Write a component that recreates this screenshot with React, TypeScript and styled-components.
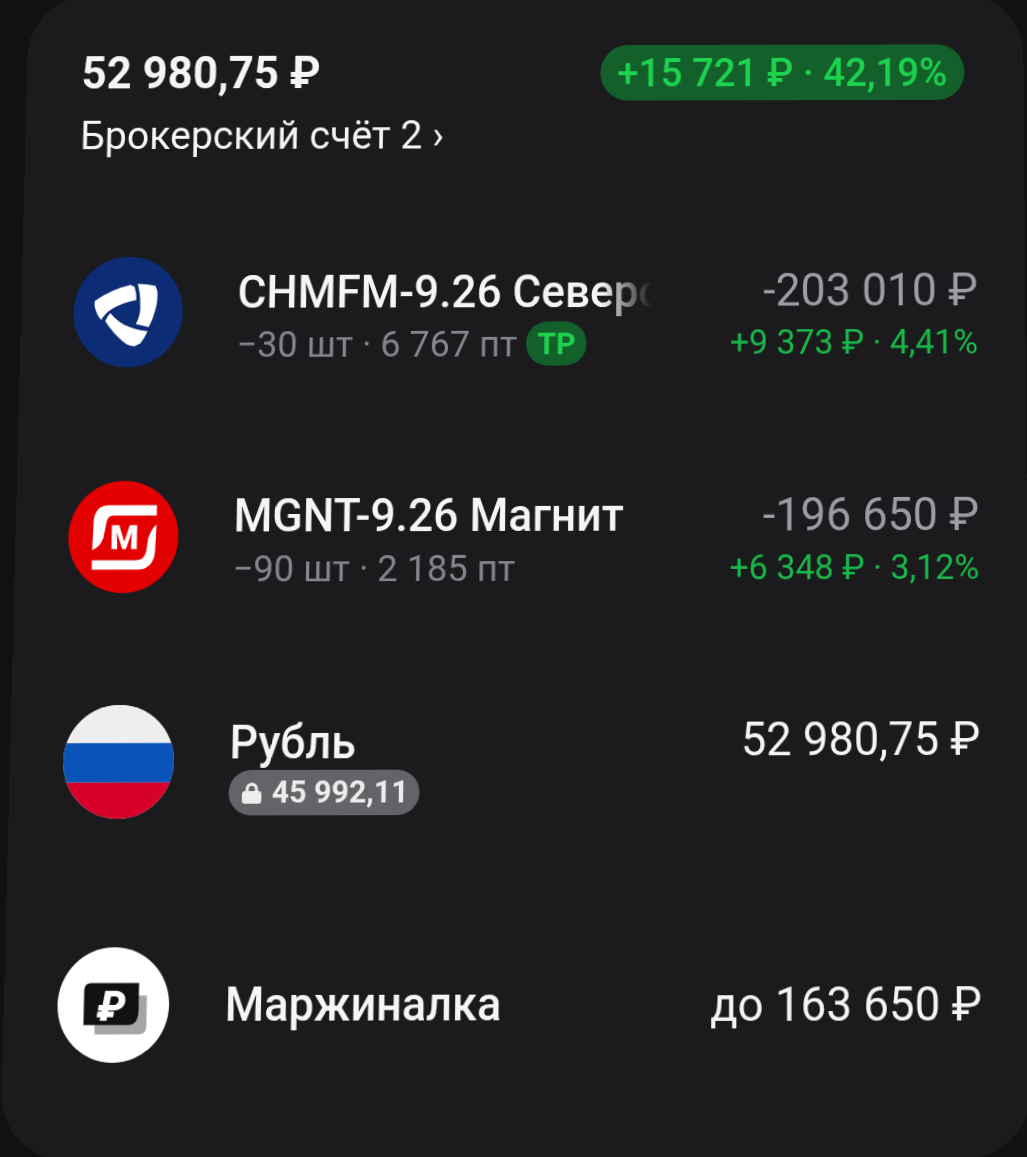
import React from "react";
import styled, { createGlobalStyle } from "styled-components";

// photo of a phone screen: the card is laid out flat, then keystoned to match
const W = 994;
const H = 1119;

function quadMatrix() {
  const [x0, y0, x1, y1, x2, y2, x3, y3] = [29, -5, 1023, -7, 1031.5, 1158, 0, 1160];
  const dx1 = x1 - x2;
  const dx2 = x3 - x2;
  const dx3 = x0 - x1 + x2 - x3;
  const dy1 = y1 - y2;
  const dy2 = y3 - y2;
  const dy3 = y0 - y1 + y2 - y3;
  const det = dx1 * dy2 - dx2 * dy1;
  const g = (dx3 * dy2 - dx2 * dy3) / det;
  const h = (dx1 * dy3 - dx3 * dy1) / det;
  const a = x1 - x0 + g * x1;
  const b = x3 - x0 + h * x3;
  const d = y1 - y0 + g * y1;
  const e = y3 - y0 + h * y3;
  return `matrix3d(${a / W},${d / W},0,${g / W},${b / H},${e / H},0,${h / H},0,0,1,0,${x0},${y0},0,1)`;
}

const GlobalStyle = createGlobalStyle`
  html, body {
    margin: 0;
    padding: 0;
    height: 100%;
    background: #111112;
    overflow: hidden;
  }
`;

const Screen = styled.div`
  width: 1027px;
  height: 1157px;
  overflow: hidden;
  background: #111112;
`;

const Card = styled.div`
  width: ${W}px;
  height: ${H}px;
  box-sizing: border-box;
  padding: 53px 47px 0 52px;
  background: #1b1b1d;
  border-radius: 62px;
  font-family: Roboto, "Noto Sans", sans-serif;
  color: #f4f5f7;
  transform-origin: 0 0;
  transform: ${quadMatrix()};
`;

const Header = styled.div`
  display: flex;
  justify-content: space-between;
  align-items: flex-start;
  height: 151px;
  padding-left: 2.5px;
`;

const Total = styled.div`
  font-size: 43.6px;
  font-weight: 700;
  line-height: 52px;
`;

const Account = styled.div`
  margin-top: 11px;
  font-size: 39px;
  line-height: 48px;
`;

const Pill = styled.div`
  height: 55px;
  padding: 0 17px;
  border-radius: 28px;
  background: #14602b;
  color: #1cd24f;
  font-size: 38.3px;
  font-weight: 500;
  line-height: 55px;
  margin-right: 12px;
  margin-top: -2px;
`;

const Row = styled.div<{ $height: number }>`
  display: flex;
  align-items: center;
  height: ${(p) => p.$height}px;
`;

const Avatar = styled.div<{ $bg: string }>`
  flex: none;
  width: 108px;
  height: 108px;
  border-radius: 50%;
  overflow: hidden;
  background: ${(p) => p.$bg};
  svg {
    display: block;
    width: 100%;
    height: 100%;
  }
`;

const Info = styled.div<{ $top: number }>`
  flex: 1;
  min-width: 0;
  margin-left: 54px;
  padding-top: ${(p) => p.$top}px;
`;

const Name = styled.div<{ $fade?: boolean }>`
  font-size: 43.7px;
  font-weight: 500;
  line-height: 54px;
  white-space: nowrap;
  overflow: hidden;
  max-width: 410px;
  ${(p) =>
    p.$fade &&
    "mask-image: linear-gradient(to right, #000 88%, transparent 100%);"}
`;

const Sub = styled.div`
  display: flex;
  align-items: center;
  height: 48px;
  font-size: 35.6px;
  color: #83868c;
`;

const Tag = styled.span`
  margin-left: 9px;
  height: 43px;
  padding: 0 11px;
  border-radius: 22px;
  background: #14602b;
  color: #1cd24f;
  font-size: 30px;
  font-weight: 700;
  line-height: 43px;
`;

const Lock = styled.div`
  display: inline-flex;
  align-items: center;
  gap: 10px;
  height: 43px;
  margin-top: -1px;
  padding: 0 10px 0 13px;
  border-radius: 22px;
  background: #636467;
  color: #ededee;
  font-size: 29.6px;
  font-weight: 700;
  svg {
    width: 19px;
    height: 21px;
  }
`;

const Amounts = styled.div<{ $single?: boolean }>`
  align-self: center;
  flex: none;
  padding-top: ${(p) => (p.$single ? 2 : 7)}px;
  text-align: right;
`;

const Price = styled.div<{ $muted?: boolean }>`
  font-size: 44.2px;
  line-height: 54px;
  color: ${(p) => (p.$muted ? "#9a9da3" : "#f4f5f7")};
`;

const Gain = styled.div`
  font-size: 33.4px;
  line-height: 48px;
  color: #19b84a;
`;

const SeverstalLogo = () => (
  <svg viewBox="0 0 110 110">
    <path
      fill="#fff"
      d="M21 44Q38 32 57 28L61 30Q63 36 63 43Q47 46 37 53Q31 57 28 63Q23 58 21 49Z"
    />
    <path
      fill="#fff"
      d="M64 27Q73 27 82 29L84 34Q85 44 82 54Q80 63 76 70L63 67Q68 57 67 48Q67 36 64 27Z"
    />
    <path
      fill="#fff"
      d="M32 64Q34 59 37 56Q44 64 52 68Q63 73 75 74Q72 81 68 86L62 89Q56 89 50 84Q40 76 32 64Z"
    />
  </svg>
);

const MagnitLogo = () => (
  <svg viewBox="0 0 110 110">
    <path
      fill="#fff"
      d="M24 68L25 38Q27 24 40 24H88V34H45Q39 34 38 40L35 56Q32 65 24 68ZM24 78H68Q76 78 78 70L80 56Q83 47 88 43L87 70Q85 87 70 87H24Z"
    />
    <text
      x="56"
      y="67"
      fontFamily="Roboto, sans-serif"
      fontSize="33"
      fontWeight="900"
      fill="#fff"
      textAnchor="middle"
    >
      М
    </text>
  </svg>
);

const FlagLogo = () => (
  <svg viewBox="0 0 110 110">
    <rect width="110" height="37" fill="#eeeeef" />
    <rect y="37" width="110" height="38" fill="#0a53b8" />
    <rect y="75" width="110" height="35" fill="#d6002a" />
  </svg>
);

const MarginLogo = () => (
  <svg viewBox="0 0 110 110">
    <path fill="#a5a5a5" d="M37 46H88V75Q88 83 80 83H37Z" />
    <path fill="#111" d="M33 34H80V60Q80 74 70 74H26V41Q26 34 33 34Z" />
    <text
      x="53"
      y="70"
      fontFamily="Roboto, sans-serif"
      fontSize="40"
      fontWeight="900"
      fontStyle="italic"
      fill="#fff"
      textAnchor="middle"
    >
      ₽
    </text>
  </svg>
);

function App() {
  return (
    <Screen>
      <GlobalStyle />
      <Card>
        <Header>
          <div>
            <Total>52 980,75 ₽</Total>
            <Account>Брокерский счёт 2 ›</Account>
          </div>
          <Pill>+15 721 ₽ · 42,19%</Pill>
        </Header>
        <Row $height={218}>
          <Avatar $bg="#0c2d76">
            <SeverstalLogo />
          </Avatar>
          <Info $top={9}>
            <Name $fade>CHMFM-9.26 Северсталь</Name>
            <Sub>
              −30 шт · 6 767 пт<Tag>ТР</Tag>
            </Sub>
          </Info>
          <Amounts>
            <Price $muted>-203 010 ₽</Price>
            <Gain>+9 373 ₽ · 4,41%</Gain>
          </Amounts>
        </Row>
        <Row $height={218}>
          <Avatar $bg="#e30000">
            <MagnitLogo />
          </Avatar>
          <Info $top={8}>
            <Name>MGNT-9.26 Магнит</Name>
            <Sub>−90 шт · 2 185 пт</Sub>
          </Info>
          <Amounts>
            <Price $muted>-196 650 ₽</Price>
            <Gain>+6 348 ₽ · 3,12%</Gain>
          </Amounts>
        </Row>
        <Row $height={212}>
          <Avatar $bg="#eeeeef">
            <FlagLogo />
          </Avatar>
          <Info $top={5}>
            <Name>Рубль</Name>
            <Lock>
              <svg viewBox="0 0 19 21">
                <path
                  fill="none"
                  stroke="#ededee"
                  strokeWidth="3"
                  d="M5 10V7a4.5 4.5 0 0 1 9 0v3"
                />
                <rect y="9" width="19" height="12" rx="3" fill="#ededee" />
              </svg>
              45 992,11
            </Lock>
          </Info>
          <Amounts>
            <Price>52 980,75 ₽</Price>
            <Gain>&nbsp;</Gain>
          </Amounts>
        </Row>
        <Row $height={246}>
          <Avatar $bg="#ffffff">
            <MarginLogo />
          </Avatar>
          <Info $top={0}>
            <Name>Маржиналка</Name>
          </Info>
          <Amounts $single>
            <Price>до 163 650 ₽</Price>
          </Amounts>
        </Row>
      </Card>
    </Screen>
  );
}

export default App;
